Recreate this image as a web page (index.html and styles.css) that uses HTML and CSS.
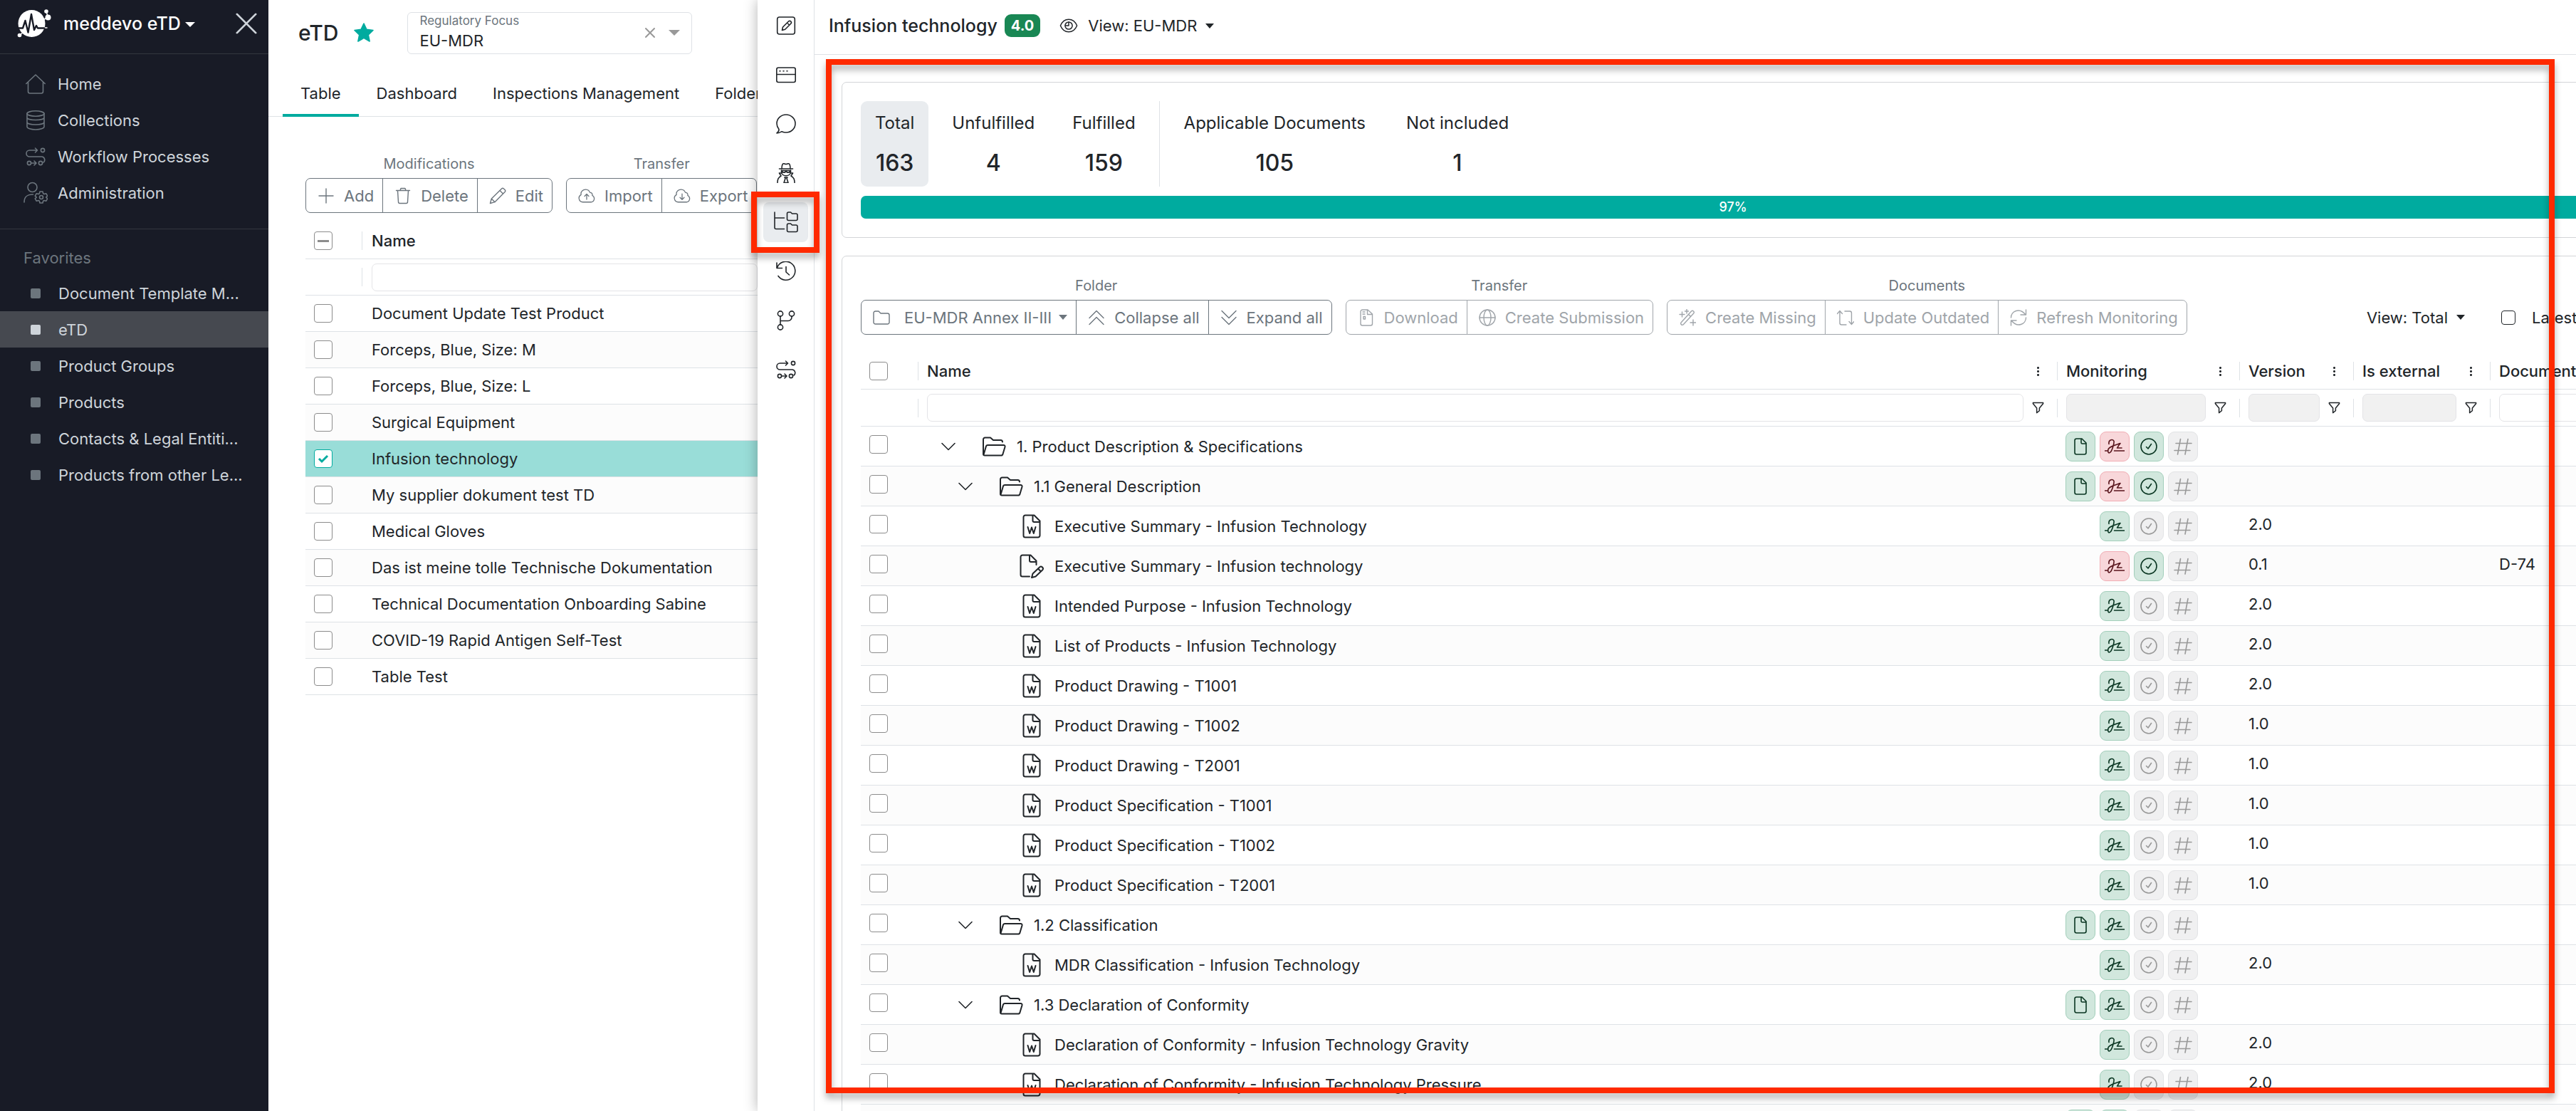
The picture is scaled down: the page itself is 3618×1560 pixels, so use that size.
FILE: index.html
```html
<!DOCTYPE html>
<html lang="en">
<head>
<meta charset="utf-8">
<title>eTD</title>
<link rel="stylesheet" href="styles.css">
</head>
<body>
<svg class="sprite" aria-hidden="true">
  <symbol id="home" viewBox="0 0 28 28"><path d="M.8 13.5 14 1l13.200 12.500M3.500 11v13.500a2.500 2.500 0 0 0 2.500 2.500h16a2.500 2.500 0 0 0 2.500-2.500V11"/></symbol>
  <symbol id="database" viewBox="0 0 28 28"><ellipse cx="14" cy="4.500" rx="12" ry="3.700"/><path d="M2 4.500v18.500c0 2.200 5.400 4 12 4s12-1.800 12-4V4.500M2 10c0 2.200 5.400 3.500 12 3.500S26 12.200 26 10M2 16.500C2 18.700 7.400 20 14 20s12-1.300 12-3.500"/></symbol>
  <symbol id="flow" viewBox="0 0 28 28"><path d="M16.500 5H5.500a4.500 4.500 0 0 0 0 9H23a4.500 4.500 0 0 1 2 8M13.500 2l3 3-3 3M8 23h6.500M12 20l3 3-3 3"/><circle cx="24" cy="5" r="2.600"/><circle cx="5" cy="23" r="2.600"/><circle cx="21" cy="23" r="2.600"/></symbol>
  <symbol id="admin" viewBox="0 0 34 32"><circle cx="12.500" cy="8" r="6.500"/><path d="M1 29c0-8 4-11 12.500-11"/><circle cx="25" cy="22" r="2.500"/><path d="M23 14h4l.6 2.700 1.500.8 2.600-.8 2 3.400-2 1.900 2 1.900-2 3.400-2.600-.8-1.500.8L27 30h-4l-.6-2.700-1.500-.8-2.600.8-2-3.400 2-1.900-2-1.900 2-3.400 2.600.8 1.500-.8z"/></symbol>
  <symbol id="edit-box" viewBox="0 0 28 28"><rect x="1.700" y="2" width="24.600" height="24" rx="3"/><path d="M8.500 20.500 9.500 16l8-8a2.200 2.200 0 0 1 3.200 3.200l-8 8zM15.500 10l3 3"/></symbol>
  <symbol id="window" viewBox="0 0 28 28"><rect x=".8" y="4" width="26.400" height="20.500" rx="2.500"/><path d="M1 13.500h26M5 8.800h1M10 8.800h1M15 8.800h1"/></symbol>
  <symbol id="chat" viewBox="0 0 28 28"><path d="M1 27c2-1.500 3.200-3.500 3-5.500C2 19 1 16.500 1 13.500 1 6.500 6.800 1 14 1s13 5.500 13 12.500S21.200 26 14 26c-2.300 0-4.200-.5-6-1.300C6 26 3.500 27 1 27z"/></symbol>
  <symbol id="spy" viewBox="0 0 28 28"><path d="M8 8c0-5 1-8.500 4-7 1.500.7 2.500.7 4 0 3-1.500 4 2 4 7M4.500 8h19M7.500 10v2.500c0 7 13 7 13 0V10M8 10.500h12M8.500 11c.5 3 4.500 3 5 0M14.500 11c.5 3 4.500 3 5 0M2 28c0-5.500 1-7.500 5-10L4.500 14H8M26 28c0-5.500-1-7.500-5-10l2.500-4H20M12 20h4l-1 1.500 2 6h-6l2-6z"/></symbol>
  <symbol id="tree" viewBox="0 0 34 30"><path d="M1 1v21.500a2 2 0 0 0 2 2h11.500M1 9h13.500M18.500 3a2 2 0 0 1 2-2h3l2 2H31a2 2 0 0 1 2 2v5.500a2 2 0 0 1-2 2H20.500a2 2 0 0 1-2-2zM18.500 19a2 2 0 0 1 2-2h3l2 2H31a2 2 0 0 1 2 2v5.500a2 2 0 0 1-2 2H20.500a2 2 0 0 1-2-2z"/></symbol>
  <symbol id="history" viewBox="0 0 28 28"><path d="M1 2v7.500h7.500M1.500 9A13 13 0 1 1 3 20.500M14 7.500V15l4.500 4"/></symbol>
  <symbol id="branch" viewBox="0 0 28 28"><circle cx="6" cy="4.500" r="3.600"/><circle cx="22" cy="4.500" r="3.600"/><circle cx="6" cy="23.500" r="3.600"/><path d="M6 8v12M6 14.500h11a5 5 0 0 0 5-5V8"/></symbol>
  <symbol id="plus" viewBox="0 0 24 24"><path d="M12 2v20M2 12h20"/></symbol>
  <symbol id="trash" viewBox="0 0 24 24"><path d="M2.500 4.500h19M8 4.500l1-3h6l1 3M4.500 4.500l1 16a2 2 0 0 0 2 2h9a2 2 0 0 0 2-2l1-16"/></symbol>
  <symbol id="pencil" viewBox="0 0 24 24"><path d="m1.500 22.500 1.800-6.500L17.500 1.900a2.200 2.200 0 0 1 3 0l1.600 1.600a2.200 2.200 0 0 1 0 3L8 20.700zM15 4.500 19.500 9M3.300 16 8 20.700"/></symbol>
  <symbol id="upload" viewBox="0 0 26 24"><path d="M7 21.500a6 6 0 0 1-2.500-11.300C3.500 5.500 7.500 2 12 2.500c3 .3 5 2 6 4.500 3 0 4 2 3.500 4.500A5.300 5.300 0 0 1 20 21.500zM13 17.500V9.500M9.800 12.500 13 9.300l3.200 3.200"/></symbol>
  <symbol id="download" viewBox="0 0 26 24"><path d="M7 21.500a6 6 0 0 1-2.500-11.300C3.500 5.500 7.500 2 12 2.500c3 .3 5 2 6 4.500 3 0 4 2 3.500 4.500A5.300 5.300 0 0 1 20 21.500zM13 9v8.500M9.800 14.500l3.200 3.200 3.200-3.200"/></symbol>
  <symbol id="folder" viewBox="0 0 24 24"><path d="M1 5.500a2.500 2.500 0 0 1 2.500-2.500H8l3 3h9.500A2.500 2.500 0 0 1 23 8.500v10a2.500 2.500 0 0 1-2.500 2.500h-17A2.500 2.500 0 0 1 1 18.500z"/></symbol>
  <symbol id="collapse" viewBox="0 0 24 24"><path d="m2 12.500 10-10 10 10M2 21.500l10-10 10 10"/></symbol>
  <symbol id="expand" viewBox="0 0 24 24"><path d="m2 2.500 10 10 10-10M2 11.500l10 10 10-10"/></symbol>
  <symbol id="zip" viewBox="0 0 24 24"><path d="M4 3.500A2.500 2.500 0 0 1 6.500 1H14l6.500 6v13.500A2.500 2.500 0 0 1 18 23H6.500A2.500 2.500 0 0 1 4 20.500zM13.500 1v6.500h7M7 4h3M7 7h3M8 10.500h2.500v3.500H8z"/></symbol>
  <symbol id="globe" viewBox="0 0 24 24"><circle cx="12" cy="12" r="11"/><ellipse cx="12" cy="12" rx="5" ry="11"/><path d="M1 12h22"/></symbol>
  <symbol id="wand" viewBox="0 0 24 24"><path d="M3 19 17.500 3a2.200 2.200 0 0 1 3.200 3L6 22a2.200 2.200 0 0 1-3-3zM13.500 7.500l3 3M4.500 4v7M1 7.500h7M11 0v6M8.500 3h5M20 15v8M16 19h8"/></symbol>
  <symbol id="swap" viewBox="0 0 24 24"><path d="M4 3v16.500a2.500 2.500 0 0 0 2.500 2.500H13M.5 6.500 4 2.500l3.500 4M11 3h7a2.500 2.500 0 0 1 2.500 2.500V21M17 17.500l3.500 4 3.500-4"/></symbol>
  <symbol id="refresh" viewBox="0 0 24 24"><path d="M22.500 1v7H15M1.500 23v-7H9M1.500 12C1.500 3 13.500-3 22 8M22.500 12c0 9-12 15-20.500 4"/></symbol>
  <symbol id="chevron" viewBox="0 0 20 12"><path d="m1 1.500 9 9 9-9"/></symbol>
  <symbol id="folder-open" viewBox="0 0 34 28"><path d="M2 25V4a2.500 2.500 0 0 1 2.500-2.500h7.500L16 5h10.500A2.500 2.500 0 0 1 29 7.500M2.500 25.500 6 13.500A2.500 2.500 0 0 1 8.500 12h22A2 2 0 0 1 32.500 14.500l-3 10A2.500 2.500 0 0 1 27 26.500H4A2 2 0 0 1 2 24.500"/></symbol>
  <symbol id="word" viewBox="0 0 34 34"><path d="M5.500 4A2.500 2.500 0 0 1 8 1.500h12.500l8 8V30a2.500 2.500 0 0 1-2.500 2.500H8A2.500 2.500 0 0 1 5.500 30zM18.500 2v7a2 2 0 0 0 2 2h8M11.500 18l2.700 9L17 18.500l2.800 8.500 2.700-9"/></symbol>
  <symbol id="doc-edit" viewBox="0 0 34 34"><path d="M14 31.500H4A2.500 2.500 0 0 1 1.500 29V4A2.500 2.500 0 0 1 4 1.500h11.500l8 8V15M14 2v7a2 2 0 0 0 2 2h7.500M17 33l1.500-5.500 9.500-9a2.500 2.500 0 0 1 4 4l-9.500 9zM26 20.500l3.500 3.500"/></symbol>
  <symbol id="file" viewBox="0 0 28 28"><path d="M6 5.500A2.500 2.500 0 0 1 8.500 3H16l6 6v13.500a2.500 2.500 0 0 1-2.500 2.500h-11A2.500 2.500 0 0 1 6 22.500zM15 3v5.500A1.500 1.500 0 0 0 16.500 10H22"/></symbol>
  <symbol id="sign" viewBox="0 0 28 28"><path d="M0 20h5M13.500 20H28M6 10.500C5 4 12 3 13 6.500c.6 3-2.500 13-5 15.500-2.500 2.500-4-.5-3-4C6 14.500 13 12.500 22 9.500 18 14 18 16.500 17.500 16H24"/></symbol>
  <symbol id="check" viewBox="0 0 28 28"><circle cx="14" cy="14" r="11"/><path d="m10.500 14.500 2.500 2.500 4.500-6.500"/></symbol>
  <symbol id="hash" viewBox="0 0 28 28"><path d="M10.500 3.500 6.500 25M21 3.500 17 25M4 9.500h22M2 19.500h22"/></symbol>
  <symbol id="funnel" viewBox="0 0 18 18"><path d="M1.500 1.500h15v1.500L11 9.500v4l-4 3v-7L1.500 3z"/></symbol>
  <symbol id="eye" viewBox="0 0 28 28"><path d="M1.500 14C4 8 8.500 4.500 14 4.500S24 8 26.500 14C24 20 19.500 23.500 14 23.500S4 20 1.500 14z"/><circle cx="14" cy="14" r="5.500"/><path d="M14 8.500V14h-5"/></symbol>
</svg>

<div class="app">
  <aside class="sidebar">
    <header class="brand">
      <svg class="logo" viewBox="0 0 48 42"><circle cx="20.500" cy="21" r="19"/><path class="link" d="M41 4l2.500 8.500L36 16M3.500 37.500 9 33M36 27h6"/><circle cx="41" cy="4" r="2.800"/><circle cx="43.500" cy="12.500" r="4"/><circle cx="3.500" cy="37.500" r="2.800"/><path class="pulse" d="M0 27.500h8L11.500 17l4 16.500L20 8l4 22 3-6 2 3.500h9"/></svg>
      <button class="brand-name" type="button">meddevo eTD <i class="caret"></i></button>
      <button class="close" type="button" aria-label="Close menu"><svg viewBox="0 0 32 32"><path d="m2 2 28 28M30 2 2 30"/></svg></button>
    </header>
    <nav class="menu">
      <a href="#"><svg class="ic"><use href="#home"/></svg>Home</a>
      <a href="#"><svg class="ic"><use href="#database"/></svg>Collections</a>
      <a href="#"><svg class="ic"><use href="#flow"/></svg>Workflow Processes</a>
      <a href="#"><svg class="ic wide"><use href="#admin"/></svg>Administration</a>
    </nav>
    <nav class="favorites">
      <h2>Favorites</h2>
      <a href="#">Document Template M...</a>
      <a href="#" class="active">eTD</a>
      <a href="#">Product Groups</a>
      <a href="#">Products</a>
      <a href="#">Contacts &amp; Legal Entiti...</a>
      <a href="#">Products from other Le...</a>
    </nav>
  </aside>

  <main class="main">
    <header class="page-head">
      <h1>eTD</h1>
      <svg class="star" viewBox="0 0 28 28"><path d="m14 1 3.900 8.400 9.100 1.100-6.700 6.300 1.800 9.200-8.100-4.600L5.900 26l1.800-9.200L1 10.500l9.100-1.100z"/></svg>
      <div class="focus">
        <div><label for="focus">Regulatory Focus</label><input id="focus" value="EU-MDR"></div>
        <button type="button" aria-label="Clear"><svg viewBox="0 0 16 16"><path d="m2 2 12 12M14 2 2 14"/></svg></button>
        <i class="caret"></i>
      </div>
    </header>
    <nav class="tabs">
      <a href="#" class="active">Table</a><a href="#">Dashboard</a><a href="#">Inspections Management</a><a href="#">Folders</a>
    </nav>
    <section class="list">
      <div class="toolbar">
        <div class="group"><span>Modifications</span><div class="buttons">
          <button type="button"><svg><use href="#plus"/></svg>Add</button><button type="button"><svg><use href="#trash"/></svg>Delete</button><button type="button"><svg><use href="#pencil"/></svg>Edit</button></div></div>
        <div class="group"><span>Transfer</span><div class="buttons">
          <button type="button"><svg><use href="#upload"/></svg>Import</button><button type="button"><svg><use href="#download"/></svg>Export</button></div></div>
      </div>
      <table class="products">
        <colgroup><col class="c-sel"><col></colgroup>
        <thead>
          <tr><th><input type="checkbox" class="mixed" aria-label="Select all"></th><th class="sep">Name</th></tr>
          <tr><td></td><td class="sep"><input type="text" aria-label="Filter name"></td></tr>
        </thead>
        <tbody>
          <tr><td><input type="checkbox" id="p1"></td><td><label for="p1">Document Update Test Product</label></td></tr>
          <tr><td><input type="checkbox" id="p2"></td><td><label for="p2">Forceps, Blue, Size: M</label></td></tr>
          <tr><td><input type="checkbox" id="p3"></td><td><label for="p3">Forceps, Blue, Size: L</label></td></tr>
          <tr><td><input type="checkbox" id="p4"></td><td><label for="p4">Surgical Equipment</label></td></tr>
          <tr class="selected"><td><input type="checkbox" id="p5" checked></td><td><label for="p5">Infusion technology</label></td></tr>
          <tr><td><input type="checkbox" id="p6"></td><td><label for="p6">My supplier dokument test TD</label></td></tr>
          <tr><td><input type="checkbox" id="p7"></td><td><label for="p7">Medical Gloves</label></td></tr>
          <tr><td><input type="checkbox" id="p8"></td><td><label for="p8">Das ist meine tolle Technische Dokumentation</label></td></tr>
          <tr><td><input type="checkbox" id="p9"></td><td><label for="p9">Technical Documentation Onboarding Sabine</label></td></tr>
          <tr><td><input type="checkbox" id="p10"></td><td><label for="p10">COVID-19 Rapid Antigen Self-Test</label></td></tr>
          <tr><td><input type="checkbox" id="p11"></td><td><label for="p11">Table Test</label></td></tr>
        </tbody>
      </table>
    </section>
  </main>

  <section class="drawer">
    <nav class="rail">
      <button type="button" aria-label="Edit"><svg><use href="#edit-box"/></svg></button>
      <button type="button" aria-label="Overview"><svg><use href="#window"/></svg></button>
      <button type="button" aria-label="Comments"><svg><use href="#chat"/></svg></button>
      <button type="button" aria-label="Inspection"><svg><use href="#spy"/></svg></button>
      <button type="button" aria-label="Folder structure" class="active"><svg class="wide"><use href="#tree"/></svg></button>
      <button type="button" aria-label="History"><svg><use href="#history"/></svg></button>
      <button type="button" aria-label="Versions"><svg><use href="#branch"/></svg></button>
      <button type="button" aria-label="Workflows"><svg><use href="#flow"/></svg></button>
    </nav>
    <div class="content">
      <header class="drawer-head">
        <h2>Infusion technology</h2><span class="version">4.0</span>
        <button type="button" class="view"><svg><use href="#eye"/></svg>View: EU-MDR <i class="caret"></i></button>
      </header>
      <div class="body">
        <section class="card">
          <div class="stats">
            <div class="stat active"><span>Total</span><b>163</b></div>
            <div class="stat"><span>Unfulfilled</span><b>4</b></div>
            <div class="stat"><span>Fulfilled</span><b>159</b></div>
            <div class="stat first"><span>Applicable Documents</span><b>105</b></div>
            <div class="stat"><span>Not included</span><b>1</b></div>
          </div>
          <div class="progress"><div class="bar" role="progressbar" aria-valuenow="97" aria-valuemin="0" aria-valuemax="100" style="width:97%">97%</div></div>
        </section>
        <section class="card">
          <div class="toolbar">
            <div class="group"><span>Folder</span><div class="buttons">
              <button type="button" class="drop"><svg><use href="#folder"/></svg>EU-MDR Annex II-III <i class="caret"></i></button><button type="button"><svg><use href="#collapse"/></svg>Collapse all</button><button type="button"><svg><use href="#expand"/></svg>Expand all</button></div></div>
            <div class="group"><span>Transfer</span><div class="buttons">
              <button type="button" disabled><svg><use href="#zip"/></svg>Download</button><button type="button" disabled><svg><use href="#globe"/></svg>Create Submission</button></div></div>
            <div class="group"><span>Documents</span><div class="buttons">
              <button type="button" disabled><svg><use href="#wand"/></svg>Create Missing</button><button type="button" disabled><svg><use href="#swap"/></svg>Update Outdated</button><button type="button" disabled><svg><use href="#refresh"/></svg>Refresh Monitoring</button></div></div>
            <div class="options">
              <button type="button" class="view">View: Total <i class="caret"></i></button>
              <label><input type="checkbox">Latest</label>
            </div>
          </div>
          <table class="docs">
            <colgroup><col class="c-check"><col><col class="c-mon"><col class="c-ver"><col class="c-ext"><col class="c-doc"></colgroup>
            <thead>
              <tr><th><input type="checkbox" aria-label="Select all"></th>
                <th class="sep"><div class="cell"><span>Name</span><i class="dots"></i></div></th>
                <th class="sep"><div class="cell"><span>Monitoring</span><i class="dots"></i></div></th>
                <th class="sep"><div class="cell"><span>Version</span><i class="dots"></i></div></th>
                <th class="sep"><div class="cell"><span>Is external</span><i class="dots"></i></div></th>
                <th class="sep">Document</th></tr>
              <tr><td></td>
                <td class="sep"><div class="cell"><input type="text" aria-label="Filter name"><svg><use href="#funnel"/></svg></div></td>
                <td class="sep"><div class="cell"><input type="text" disabled aria-label="Filter monitoring"><svg><use href="#funnel"/></svg></div></td>
                <td class="sep"><div class="cell"><input type="text" disabled aria-label="Filter version"><svg><use href="#funnel"/></svg></div></td>
                <td class="sep"><div class="cell"><input type="text" disabled aria-label="Filter external"><svg><use href="#funnel"/></svg></div></td>
                <td class="sep"><div class="cell"><input type="text" aria-label="Filter document"></div></td></tr>
            </thead>
            <tbody>
              <tr><td><input type="checkbox" id="d1"></td><td><div class="node l1"><svg class="chev"><use href="#chevron"/></svg><svg><use href="#folder-open"/></svg><label for="d1">1. Product Description &amp; Specifications</label></div></td><td><div class="marks"><svg class="ok"><use href="#file"/></svg><svg class="bad"><use href="#sign"/></svg><svg class="ok"><use href="#check"/></svg><svg><use href="#hash"/></svg></div></td><td></td><td></td><td></td></tr>
              <tr><td><input type="checkbox" id="d2"></td><td><div class="node l2"><svg class="chev"><use href="#chevron"/></svg><svg><use href="#folder-open"/></svg><label for="d2">1.1 General Description</label></div></td><td><div class="marks"><svg class="ok"><use href="#file"/></svg><svg class="bad"><use href="#sign"/></svg><svg class="ok"><use href="#check"/></svg><svg><use href="#hash"/></svg></div></td><td></td><td></td><td></td></tr>
              <tr><td><input type="checkbox" id="d3"></td><td><div class="node l3"><svg><use href="#word"/></svg><label for="d3">Executive Summary - Infusion Technology</label></div></td><td><div class="marks"><svg class="ok"><use href="#sign"/></svg><svg><use href="#check"/></svg><svg><use href="#hash"/></svg></div></td><td>2.0</td><td></td><td></td></tr>
              <tr><td><input type="checkbox" id="d4"></td><td><div class="node l3"><svg><use href="#doc-edit"/></svg><label for="d4">Executive Summary - Infusion technology</label></div></td><td><div class="marks"><svg class="bad"><use href="#sign"/></svg><svg class="ok"><use href="#check"/></svg><svg><use href="#hash"/></svg></div></td><td>0.1</td><td></td><td>D-74</td></tr>
              <tr><td><input type="checkbox" id="d5"></td><td><div class="node l3"><svg><use href="#word"/></svg><label for="d5">Intended Purpose - Infusion Technology</label></div></td><td><div class="marks"><svg class="ok"><use href="#sign"/></svg><svg><use href="#check"/></svg><svg><use href="#hash"/></svg></div></td><td>2.0</td><td></td><td></td></tr>
              <tr><td><input type="checkbox" id="d6"></td><td><div class="node l3"><svg><use href="#word"/></svg><label for="d6">List of Products - Infusion Technology</label></div></td><td><div class="marks"><svg class="ok"><use href="#sign"/></svg><svg><use href="#check"/></svg><svg><use href="#hash"/></svg></div></td><td>2.0</td><td></td><td></td></tr>
              <tr><td><input type="checkbox" id="d7"></td><td><div class="node l3"><svg><use href="#word"/></svg><label for="d7">Product Drawing - T1001</label></div></td><td><div class="marks"><svg class="ok"><use href="#sign"/></svg><svg><use href="#check"/></svg><svg><use href="#hash"/></svg></div></td><td>2.0</td><td></td><td></td></tr>
              <tr><td><input type="checkbox" id="d8"></td><td><div class="node l3"><svg><use href="#word"/></svg><label for="d8">Product Drawing - T1002</label></div></td><td><div class="marks"><svg class="ok"><use href="#sign"/></svg><svg><use href="#check"/></svg><svg><use href="#hash"/></svg></div></td><td>1.0</td><td></td><td></td></tr>
              <tr><td><input type="checkbox" id="d9"></td><td><div class="node l3"><svg><use href="#word"/></svg><label for="d9">Product Drawing - T2001</label></div></td><td><div class="marks"><svg class="ok"><use href="#sign"/></svg><svg><use href="#check"/></svg><svg><use href="#hash"/></svg></div></td><td>1.0</td><td></td><td></td></tr>
              <tr><td><input type="checkbox" id="d10"></td><td><div class="node l3"><svg><use href="#word"/></svg><label for="d10">Product Specification - T1001</label></div></td><td><div class="marks"><svg class="ok"><use href="#sign"/></svg><svg><use href="#check"/></svg><svg><use href="#hash"/></svg></div></td><td>1.0</td><td></td><td></td></tr>
              <tr><td><input type="checkbox" id="d11"></td><td><div class="node l3"><svg><use href="#word"/></svg><label for="d11">Product Specification - T1002</label></div></td><td><div class="marks"><svg class="ok"><use href="#sign"/></svg><svg><use href="#check"/></svg><svg><use href="#hash"/></svg></div></td><td>1.0</td><td></td><td></td></tr>
              <tr><td><input type="checkbox" id="d12"></td><td><div class="node l3"><svg><use href="#word"/></svg><label for="d12">Product Specification - T2001</label></div></td><td><div class="marks"><svg class="ok"><use href="#sign"/></svg><svg><use href="#check"/></svg><svg><use href="#hash"/></svg></div></td><td>1.0</td><td></td><td></td></tr>
              <tr><td><input type="checkbox" id="d13"></td><td><div class="node l2"><svg class="chev"><use href="#chevron"/></svg><svg><use href="#folder-open"/></svg><label for="d13">1.2 Classification</label></div></td><td><div class="marks"><svg class="ok"><use href="#file"/></svg><svg class="ok"><use href="#sign"/></svg><svg><use href="#check"/></svg><svg><use href="#hash"/></svg></div></td><td></td><td></td><td></td></tr>
              <tr><td><input type="checkbox" id="d14"></td><td><div class="node l3"><svg><use href="#word"/></svg><label for="d14">MDR Classification - Infusion Technology</label></div></td><td><div class="marks"><svg class="ok"><use href="#sign"/></svg><svg><use href="#check"/></svg><svg><use href="#hash"/></svg></div></td><td>2.0</td><td></td><td></td></tr>
              <tr><td><input type="checkbox" id="d15"></td><td><div class="node l2"><svg class="chev"><use href="#chevron"/></svg><svg><use href="#folder-open"/></svg><label for="d15">1.3 Declaration of Conformity</label></div></td><td><div class="marks"><svg class="ok"><use href="#file"/></svg><svg class="ok"><use href="#sign"/></svg><svg><use href="#check"/></svg><svg><use href="#hash"/></svg></div></td><td></td><td></td><td></td></tr>
              <tr><td><input type="checkbox" id="d16"></td><td><div class="node l3"><svg><use href="#word"/></svg><label for="d16">Declaration of Conformity - Infusion Technology Gravity</label></div></td><td><div class="marks"><svg class="ok"><use href="#sign"/></svg><svg><use href="#check"/></svg><svg><use href="#hash"/></svg></div></td><td>2.0</td><td></td><td></td></tr>
              <tr><td><input type="checkbox" id="d17"></td><td><div class="node l3"><svg><use href="#word"/></svg><label for="d17">Declaration of Conformity - Infusion Technology Pressure</label></div></td><td><div class="marks"><svg class="ok"><use href="#sign"/></svg><svg><use href="#check"/></svg><svg><use href="#hash"/></svg></div></td><td>2.0</td><td></td><td></td></tr>
              <tr><td></td><td></td><td><div class="marks"><svg class="ok"><use href="#file"/></svg><svg class="ok"><use href="#sign"/></svg><svg><use href="#check"/></svg><svg><use href="#hash"/></svg></div></td><td></td><td></td><td></td></tr>
            </tbody>
          </table>
        </section>
      </div>
      <div class="marker"></div>
    </div>
  </section>
</div>
</body>
</html>
```
FILE: styles.css
```css
* { box-sizing: border-box; }
body { margin: 0; font: 22px/32px Inter, "Liberation Sans", sans-serif; color: #212529; background: #fff; }
h1, h2 { margin: 0; font-weight: 500; }
a { color: inherit; text-decoration: none; }
button { font: inherit; color: inherit; background: none; border: 0; padding: 0; }
svg { fill: none; stroke: currentColor; stroke-width: 1.6; stroke-linecap: round; stroke-linejoin: round; flex: none; }
.sprite { position: absolute; width: 0; height: 0; }
.caret { display: inline-block; border: 6px solid transparent; border-top: 7px solid; border-bottom: 0; vertical-align: middle; margin-left: 6px; }

.app { display: grid; grid-template-columns: 377px 687px minmax(0, 1fr); grid-template-rows: minmax(0, 1fr); height: 100vh; overflow: hidden; }

/* Sidebar */
.sidebar { background: #181b26; color: #ced4da; }
.brand { display: flex; align-items: center; height: 76px; padding: 0 16px 10px 24px; border-bottom: 1px solid #33373f; }
.logo { width: 48px; height: 42px; fill: #fff; stroke: none; }
.logo .link { stroke: #fff; stroke-width: 1.500; fill: none; }
.logo .pulse { fill: none; stroke: #181b26; stroke-width: 2.400; }
.brand-name { margin-left: 17px; color: #fff; font-size: 25px; font-weight: 500; }
.brand-name .caret { border-width: 7px 7px 0; margin-left: 0; }
.close { margin-left: auto; }
.close svg { display: block; width: 30px; height: 32px; stroke-width: 3; }
.menu { padding: 16px 0 25px; border-bottom: 1px solid #33373f; }
.menu a { display: flex; align-items: center; gap: 14px; height: 51px; padding-left: 33px; }
.ic { width: 34px; height: 28px; color: #6c757d; }
.ic.wide { height: 32px; }
.favorites { padding-top: 16px; }
.favorites h2 { padding-left: 33px; font-size: 22px; font-weight: 400; line-height: 48px; color: #6c757d; }
.favorites a { display: flex; align-items: center; gap: 25px; height: 51px; padding-left: 43px; }
.favorites a::before { content: ""; width: 14px; height: 14px; border-radius: 2px; background: #6c757d; }
.favorites .active { background: #464950; }
.favorites .active::before { background: #ced4da; }

/* Product list */
.main { overflow: hidden; white-space: nowrap; }
.page-head { display: flex; align-items: center; height: 112px; padding: 0 0 20px 42px; }
.page-head h1 { font-size: 30px; }
.star { width: 28px; height: 28px; margin: 0 47px 0 21px; fill: #00ab9f; stroke: #00ab9f; }
.focus { display: flex; align-items: center; width: 400px; height: 59px; padding: 0 16px 0 17px; border: 1px solid #dee2e6; border-radius: 6px; color: #999; }
.focus div { flex: 1; padding-bottom: 2px; }
.focus label { display: block; font-size: 17px; line-height: 24px; color: #6c757d; }
.focus input { display: block; width: 100%; padding: 0; border: 0; font: inherit; color: #212529; }
.focus button svg { display: block; width: 16px; height: 16px; stroke-width: 2; }
.focus .caret { border-width: 8px 8px 0; margin-left: 18px; }
.tabs { display: flex; height: 52px; padding-left: 20px; border-bottom: 1px solid #dee2e6; }
.tabs a { flex: none; height: 52px; padding: 3px 25px 0; }
.tabs .active { border-bottom: 4px solid #00ab9f; }
.list { padding: 54px 0 0 52px; }

.toolbar { display: flex; align-items: flex-end; gap: 19px; color: #6c757d; white-space: nowrap; }
.group { flex: none; text-align: center; }
.group > span { display: block; font-size: 20px; line-height: 24px; margin-bottom: 8px; }
.buttons { display: flex; }
.buttons button { display: flex; align-items: center; height: 49px; padding: 0 12px 0 16px; border: 1px solid #6c757d; }
.buttons button + button { margin-left: -1px; }
.buttons button:first-child { border-radius: 7px 0 0 7px; }
.buttons button:last-child { border-radius: 0 7px 7px 0; }
.buttons svg { width: 24px; height: 24px; margin-right: 13px; stroke-width: 1.400; }
.buttons .drop svg { margin-right: 20px; }
.buttons .drop .caret { margin-left: 10px; }
.buttons button:disabled { color: #a0a5aa; border-color: #a0a5aa; }

input[type=checkbox] { appearance: none; display: block; width: 26px; height: 26px; margin: 0; border: 1px solid #8c8c8c; border-radius: 4px; background: #fff center / 18px 18px no-repeat; }
input[type=checkbox].mixed { background-image: linear-gradient(#8c8c8c, #8c8c8c); background-size: 16px 3px; }
input[type=checkbox]:checked { border-color: #00ab9f; background-image: url("data:image/svg+xml,%3Csvg xmlns='http://www.w3.org/2000/svg' viewBox='0 0 18 18'%3E%3Cpath d='m3 9 4 4 8-8' fill='none' stroke='%2300ab9f' stroke-width='3'/%3E%3C/svg%3E"); }
input[type=text] { display: block; width: 100%; min-width: 0; height: 39px; border: 1px solid #e4e4e7; border-radius: 7px; background: #fff; }
input[type=text]:disabled { background: #f1f1f1; }

table { width: 100%; border-collapse: separate; border-spacing: 0; table-layout: fixed; white-space: nowrap; }
th, td { padding: 0 0 0 13px; text-align: left; border-bottom: 1px solid #dee2e6; }
th:first-child, td:first-child { padding-left: 12px; }
th { font-weight: 500; }
tbody tr:nth-child(even) { background: #fcfcfc; }
.sep { background: linear-gradient(#dee2e6, #dee2e6) left center / 1px 26px no-repeat; }
.products { margin-top: 14px; }
.products th, .products td { height: 51px; }
.products .c-sel { width: 79px; }
.products td:nth-child(2), .products th:nth-child(2) { padding-left: 14px; }
.products .selected { background: #99ddd8; }

/* Drawer */
.drawer { position: relative; display: flex; background: #fff; box-shadow: 0 0 18px rgba(0, 0, 0, .3); }
.rail { display: flex; flex-direction: column; gap: 13px; width: 80px; flex: none; padding: 8px 8px 0; border-right: 1px solid #dee2e6; }
.rail button { position: relative; display: grid; place-items: center; height: 56px; border-radius: 8px; }
.rail svg { width: 28px; height: 28px; }
.rail svg.wide { width: 34px; height: 30px; }
.rail .active { background: #e9ecef; }
.rail .active::after, .marker { content: ""; position: absolute; border: 8px solid #ff2a00; filter: drop-shadow(0 7px 5px rgba(0, 0, 0, .3)); pointer-events: none; }
.rail .active::after { inset: -15px -16px -15px -17px; z-index: 2; }
.content { position: relative; flex: 1; min-width: 0; overflow: hidden; }
.marker { inset: 83px 30px 25px 16px; }
.drawer-head { display: flex; align-items: center; height: 77px; padding: 0 0 4px 20px; border-bottom: 1px solid #dee2e6; }
.drawer-head h2 { font-size: 25px; }
.version { margin: 0 27px 0 10px; padding: 0 9px; border-radius: 9px; background: #198754; color: #fff; font-size: 20px; font-weight: 700; }
.view { display: flex; align-items: center; color: #212529; }
.view svg { width: 26px; height: 26px; margin-right: 14px; }
.view .caret { margin-left: 12px; }
.body { min-width: 2618px; padding: 38px 0 0 38px; }
.card { padding: 26px; border: 1px solid #d3d5d8; border-radius: 7px; margin-bottom: 25px; }
.stats { display: flex; gap: 13px; margin-bottom: 13px; }
.stat { display: grid; justify-items: center; align-content: center; gap: 22px; height: 120px; padding: 0 20px; font-size: 24px; border-radius: 9px; }
.stat b { font-size: 32px; font-weight: 500; line-height: 36px; }
.stat.active { background: #e9ecef; }
.stat.first { border-left: 1px solid #dee2e6; border-radius: 0; padding: 0 24px 0 34px; }
.progress { height: 32px; border-radius: 7px; background: #e9ecef; overflow: hidden; }
.bar { height: 32px; background: #00ab9f; color: #fff; font-size: 18px; font-weight: 500; text-align: center; }
.card .toolbar { padding-top: 3px; }
.options { display: flex; align-items: center; gap: 51px; height: 49px; margin-left: auto; color: #212529; }
.options label { display: flex; align-items: center; gap: 23px; width: 222px; }
.options input[type=checkbox] { width: 20px; height: 20px; border-color: #212529; }

.docs { margin-top: 26px; }
.c-check { width: 80px; } .c-mon { width: 256px; } .c-ver { width: 160px; } .c-ext { width: 192px; } .c-doc { width: 238px; }
.docs thead th { height: 51px; }
.docs thead td { height: 52px; }
.cell { display: flex; align-items: center; gap: 12px; padding-right: 18px; }
.cell span { flex: 1; }
.cell svg { width: 17px; height: 17px; }
.dots { width: 17px; height: 15px; background: radial-gradient(circle, #212529 1px, #212529 1px, transparent 2px) center top / 5px 5px repeat-y; }
.docs tbody td { height: 56px; padding-bottom: 6px; }
.docs tbody td:nth-child(2), .docs tbody td:nth-child(3) { padding-bottom: 0; }
.docs tbody td:nth-child(2) { padding-left: 0; }
.docs tbody td:nth-child(3) { padding-left: 12px; }
.node { display: flex; align-items: center; gap: 15px; }
.node svg { width: 34px; height: 34px; stroke-width: 2; }
.node .chev { width: 20px; height: 12px; margin-right: 22px; stroke-width: 1.600; }
.l1 { padding-left: 33px; } .l2 { padding-left: 57px; } .l3 { padding-left: 143px; }
.marks { display: flex; justify-content: flex-end; gap: 6px; width: 186px; }
.marks svg { width: 42px; height: 42px; padding: 6px; border: 1px solid #e2e3e5; border-radius: 9px; background: #f0f0f1; color: #999; }
.marks .ok { background: #d1e7dd; border-color: #a3cfbb; color: #0a3622; }
.marks .bad { background: #f8d7da; border-color: #f1aeb5; color: #58151c; }
```
